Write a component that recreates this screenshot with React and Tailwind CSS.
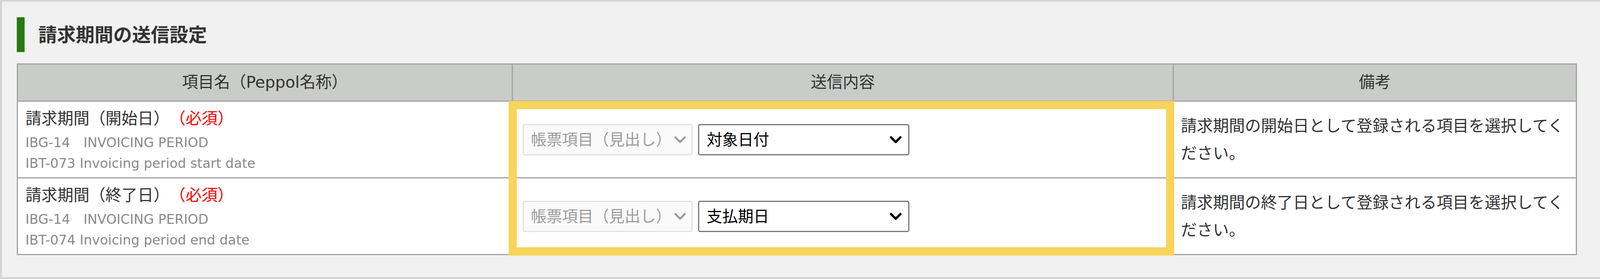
import React from 'react';

const font = { fontFamily: '"DejaVu Sans", "Noto Sans CJK JP", sans-serif' };

function Chevron({ dark }) {
  return (
    <svg width="32" height="22" viewBox="0 0 32 22" className="shrink-0">
      <polyline
        points="4,5 16,17 28,5"
        fill="none"
        stroke={dark ? '#000000' : '#9a9a9a'}
        strokeWidth={dark ? 6 : 5}
        strokeLinecap="round"
        strokeLinejoin="round"
      />
    </svg>
  );
}

function SelectPair({ value }) {
  return (
    <div className="flex items-center gap-[14px]">
      <div className="flex items-center justify-between w-[435px] h-[80px] pl-[18px] pr-[13px] bg-[#fafafa] border-[3px] border-[#e2e2e2] rounded-[5px] text-[#9c9c9c] text-[40px] whitespace-nowrap">
        <span>帳票項目（見出し）</span>
        <Chevron />
      </div>
      <div className="flex items-center justify-between w-[541px] h-[80px] pl-[19px] pr-[16px] bg-white border-[3px] border-[#767676] rounded-[5px] text-black text-[40px] whitespace-nowrap">
        <span>{value}</span>
        <Chevron dark />
      </div>
    </div>
  );
}

const rows = [
  {
    name: '請求期間（開始日）',
    ibg: 'IBG-14\u3000INVOICING PERIOD',
    ibt: 'IBT-073 Invoicing period start date',
    value: '対象日付',
    note: '請求期間の開始日として登録される項目を選択してください。',
  },
  {
    name: '請求期間（終了日）',
    ibg: 'IBG-14\u3000INVOICING PERIOD',
    ibt: 'IBT-074 Invoicing period end date',
    value: '支払期日',
    note: '請求期間の終了日として登録される項目を選択してください。',
  },
];

export default function App() {
  return (
    <div
      style={font}
      className="w-[4184px] h-[713px] bg-[#f0f1f0] border-[5px] border-t-[4px] border-[#d4d4d4] pl-[38px] pt-[40px] text-[#333333] [text-spacing-trim:space-all]"
    >
      <div className="flex items-center gap-[35px] h-[89px]">
        <div className="w-[20px] h-[89px] bg-[#277a0e]" />
        <h2 className="text-[48px] font-bold leading-none">請求期間の送信設定</h2>
      </div>

      <div className="relative w-[3991px] mt-[29px]">
        <table className="w-full table-fixed border-collapse border-[3px] border-[#a3a3a3]">
          <colgroup>
            <col className="w-[1267px]" />
            <col className="w-[1692px]" />
            <col className="w-[1032px]" />
          </colgroup>
          <thead>
            <tr className="h-[95px] bg-[#c9ccc8]">
              <th className="border-[3px] border-[#a3a3a3] text-[41px] font-normal">項目名（Peppol名称）</th>
              <th className="border-[3px] border-[#a3a3a3] text-[41px] font-normal">送信内容</th>
              <th className="border-[3px] border-[#a3a3a3] text-[41px] font-normal">備考</th>
            </tr>
          </thead>
          <tbody>
            {rows.map((r) => (
              <tr key={r.name} className="h-[196px] bg-white">
                <td className="border-[3px] border-[#a3a3a3] pl-[19px] align-middle">
                  <div className="text-[41px] leading-[69px]">
                    {r.name}
                    <span className="text-[#ff0000]">（必須）</span>
                  </div>
                  <div className="text-[34px] leading-[53px] text-[#8a8a8a]">{r.ibg}</div>
                  <div className="text-[34px] leading-[53px] text-[#8a8a8a]">{r.ibt}</div>
                </td>
                <td className="border-[3px] border-[#a3a3a3] pl-[25px] align-middle">
                  <SelectPair value={r.value} />
                </td>
                <td className="border-[3px] border-[#a3a3a3] pl-[18px] pr-[16px] align-middle text-[41px] leading-[70px]">
                  {r.note}
                </td>
              </tr>
            ))}
          </tbody>
        </table>
        <div className="absolute left-[1259px] top-[96px] w-[1704px] h-[395px] border-[21px] border-[#f8d45b] pointer-events-none" />
      </div>
    </div>
  );
}
